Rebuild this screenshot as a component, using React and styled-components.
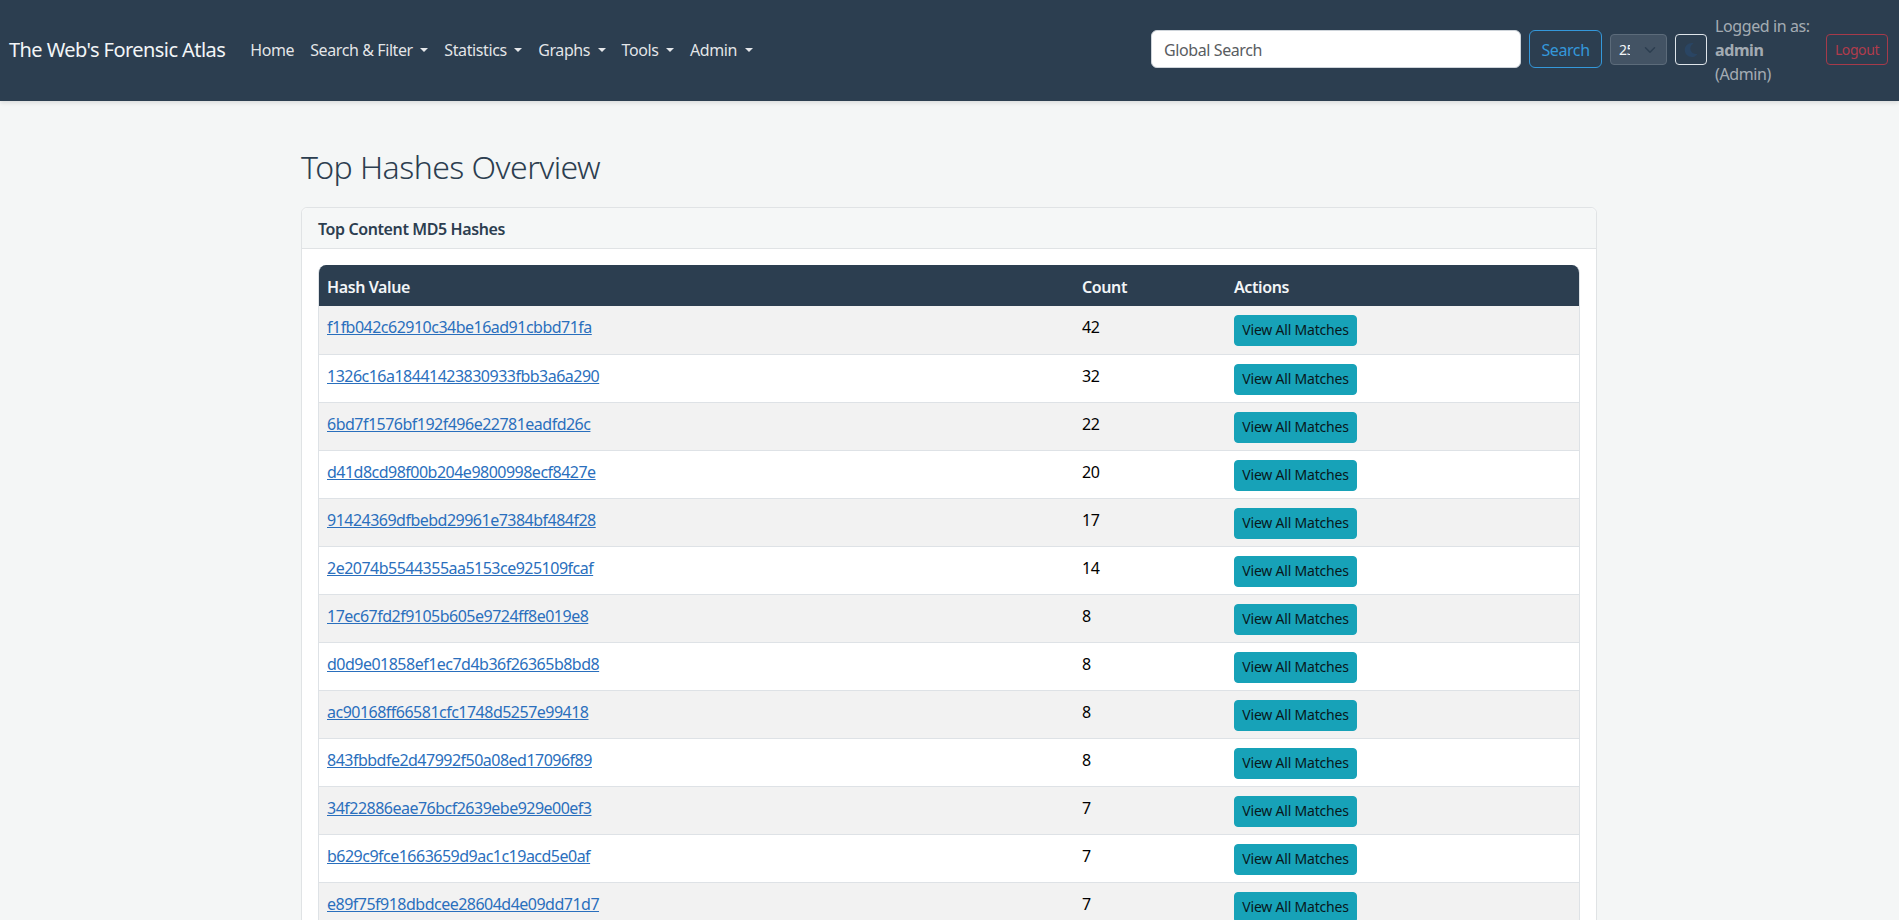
import React from "react";
import styled, { createGlobalStyle } from "styled-components";
import { FaMoon } from "react-icons/fa";

const GlobalStyle = createGlobalStyle`
  * {
    box-sizing: border-box;
  }
  html,
  body {
    margin: 0;
    height: 920px;
    overflow: hidden;
  }
  body {
    font-family: "Noto Sans", "Open Sans", sans-serif;
    font-size: 16px;
    line-height: 24px;
    letter-spacing: -0.025em;
    color: #212529;
    background-color: #f4f6f6;
  }
`;

const Navbar = styled.nav`
  display: flex;
  align-items: center;
  height: 101px;
  padding: 0 11px 2px 9px;
  background-color: #2c3e50;
  box-shadow: 0 2px 4px rgba(0, 0, 0, 0.1);
`;

const Brand = styled.a`
  margin-right: 17px;
  font-size: 20px;
  letter-spacing: -0.028em;
  color: #f2f5f7;
  white-space: nowrap;
`;

const NavList = styled.div`
  display: flex;
  align-items: center;
`;

const NavLink = styled.a`
  display: flex;
  align-items: center;
  padding: 8px;
  color: rgba(255, 255, 255, 0.88);
  white-space: nowrap;

  ${(p) =>
    p.$caret &&
    `
    &::after {
      content: "";
      margin-left: 7.5px;
      border-top: 4.8px solid currentColor;
      border-left: 4.8px solid transparent;
      border-right: 4.8px solid transparent;
    }
  `}
`;

const NavRight = styled.div`
  display: flex;
  align-items: center;
  margin-left: auto;
`;

const SearchInput = styled.input`
  width: 370px;
  height: 38px;
  margin: 0 8px 1px 0;
  padding: 7px 12px 5px;
  font: inherit;
  letter-spacing: inherit;
  color: #212529;
  background-color: #fff;
  border: 1px solid #ced4da;
  border-radius: 6px;

  &::placeholder {
    color: #595c5f;
    opacity: 1;
  }
`;

const SearchButton = styled.button`
  width: 73px;
  height: 38px;
  margin: 0 8px 1px 0;
  padding: 2px 0 0;
  font: inherit;
  letter-spacing: inherit;
  color: #3498db;
  background: transparent;
  border: 1px solid #3498db;
  border-radius: 6px;
`;

const PageSize = styled.select`
  appearance: none;
  width: 57px;
  height: 31px;
  margin-right: 8px;
  padding: 0 36px 0 8px;
  font: inherit;
  font-size: 14px;
  letter-spacing: inherit;
  color: #f2f5f7;
  background-color: #435364;
  background-image: url("data:image/svg+xml,%3csvg xmlns='http://www.w3.org/2000/svg' viewBox='0 0 16 16'%3e%3cpath fill='none' stroke='%232c3e50' stroke-linecap='round' stroke-linejoin='round' stroke-width='2' d='m2 5 6 6 6-6'/%3e%3c/svg%3e");
  background-repeat: no-repeat;
  background-position: right 8px center;
  background-size: 16px 12px;
  border: 1px solid #5c6b7a;
  border-radius: 4px;
`;

const ThemeButton = styled.button`
  display: flex;
  align-items: center;
  justify-content: center;
  width: 32px;
  height: 31px;
  margin-right: 8px;
  padding: 0;
  font-size: 14px;
  color: #2a4563;
  background: transparent;
  border: 1px solid #dfe5ea;
  border-radius: 4px;
`;

const UserInfo = styled.div`
  width: 111px;
  color: rgba(255, 255, 255, 0.58);
`;

const LogoutButton = styled.button`
  width: 62px;
  height: 31px;
  padding: 0;
  font: inherit;
  font-size: 14px;
  letter-spacing: inherit;
  color: #b13c4c;
  background: transparent;
  border: 1px solid #a63a4a;
  border-radius: 4px;
`;

const Main = styled.main`
  width: 1296px;
  margin-left: 301px;
  padding-top: 47px;
`;

const Title = styled.h1`
  margin: 0 0 21px;
  font-size: 32px;
  font-weight: 300;
  line-height: 38px;
  letter-spacing: -0.017em;
  color: #2c3e50;
`;

const Card = styled.section`
  background-color: #fff;
  border: 1px solid #e0e3e5;
  border-radius: 6px;
`;

const CardHeader = styled.h2`
  margin: 0;
  padding: 9px 16px 7px;
  font-size: 16px;
  font-weight: 600;
  line-height: 24px;
  color: #2c3e50;
  background-color: #f5f7f7;
  border-bottom: 1px solid #e0e3e5;
  border-radius: 6px 6px 0 0;
`;

const CardBody = styled.div`
  padding: 16px;
`;

const TableWrap = styled.div`
  overflow: hidden;
  border: 1px solid #dee2e6;
  border-top: 0;
  border-radius: 8px;
`;

const Table = styled.table`
  width: 100%;
  table-layout: fixed;
  border-collapse: collapse;
`;

const HeadCell = styled.th`
  width: ${(p) => p.$width || "auto"};
  padding: 10px 8px 7px;
  font-weight: 600;
  text-align: left;
  color: #f2f5f7;
  background-color: #2c3e50;
`;

const Row = styled.tr`
  height: 48px;
  background-color: ${(p) => (p.$striped ? "#f2f2f2" : "#fff")};
  border-bottom: 1px solid #dee2e6;
`;

const Cell = styled.td`
  padding: 9px 8px 7px;
  line-height: 25px;
  vertical-align: top;
  color: #000;
`;

const HashLink = styled.a`
  letter-spacing: -0.032em;
  color: #2a6fbd;
  text-decoration: underline;
`;

const MatchButton = styled.button`
  display: block;
  width: 123px;
  height: 31px;
  padding: 0 0 1px;
  font: inherit;
  font-size: 14px;
  line-height: 24px;
  letter-spacing: -0.015em;
  color: #08181c;
  background-color: #17a2b8;
  border: 1px solid #17a2b8;
  border-radius: 4px;
`;

const menu = [
  { label: "Home" },
  { label: "Search & Filter", caret: true },
  { label: "Statistics", caret: true },
  { label: "Graphs", caret: true },
  { label: "Tools", caret: true },
  { label: "Admin", caret: true },
];

const hashes = [
  ["f1fb042c62910c34be16ad91cbbd71fa", 42],
  ["1326c16a18441423830933fbb3a6a290", 32],
  ["6bd7f1576bf192f496e22781eadfd26c", 22],
  ["d41d8cd98f00b204e9800998ecf8427e", 20],
  ["91424369dfbebd29961e7384bf484f28", 17],
  ["2e2074b5544355aa5153ce925109fcaf", 14],
  ["17ec67fd2f9105b605e9724ff8e019e8", 8],
  ["d0d9e01858ef1ec7d4b36f26365b8bd8", 8],
  ["ac90168ff66581cfc1748d5257e99418", 8],
  ["843fbbdfe2d47992f50a08ed17096f89", 8],
  ["34f22886eae76bcf2639ebe929e00ef3", 7],
  ["b629c9fce1663659d9ac1c19acd5e0af", 7],
  ["e89f75f918dbdcee28604d4e09dd71d7", 7],
];

const App = () => {
  return (
    <>
      <GlobalStyle />
      <Navbar>
        <Brand>The Web's Forensic Atlas</Brand>
        <NavList>
          {menu.map((item) => (
            <NavLink key={item.label} $caret={item.caret}>
              {item.label}
            </NavLink>
          ))}
        </NavList>
        <NavRight>
          <SearchInput type="text" placeholder="Global Search" />
          <SearchButton>Search</SearchButton>
          <PageSize defaultValue="25">
            <option value="25">25</option>
            <option value="50">50</option>
            <option value="100">100</option>
          </PageSize>
          <ThemeButton aria-label="Toggle theme">
            <FaMoon />
          </ThemeButton>
          <UserInfo>
            Logged in as:
            <br />
            <strong>admin</strong>
            <br />
            (Admin)
          </UserInfo>
          <LogoutButton>Logout</LogoutButton>
        </NavRight>
      </Navbar>
      <Main>
        <Title>Top Hashes Overview</Title>
        <Card>
          <CardHeader>Top Content MD5 Hashes</CardHeader>
          <CardBody>
            <TableWrap>
              <Table>
                <thead>
                  <tr>
                    <HeadCell $width="755px">Hash Value</HeadCell>
                    <HeadCell $width="152px">Count</HeadCell>
                    <HeadCell>Actions</HeadCell>
                  </tr>
                </thead>
                <tbody>
                  {hashes.map(([hash, count], i) => (
                    <Row key={hash} $striped={i % 2 === 0}>
                      <Cell>
                        <HashLink href="#">{hash}</HashLink>
                      </Cell>
                      <Cell>{count}</Cell>
                      <Cell>
                        <MatchButton>View All Matches</MatchButton>
                      </Cell>
                    </Row>
                  ))}
                </tbody>
              </Table>
            </TableWrap>
          </CardBody>
        </Card>
      </Main>
    </>
  );
};

export default App;
